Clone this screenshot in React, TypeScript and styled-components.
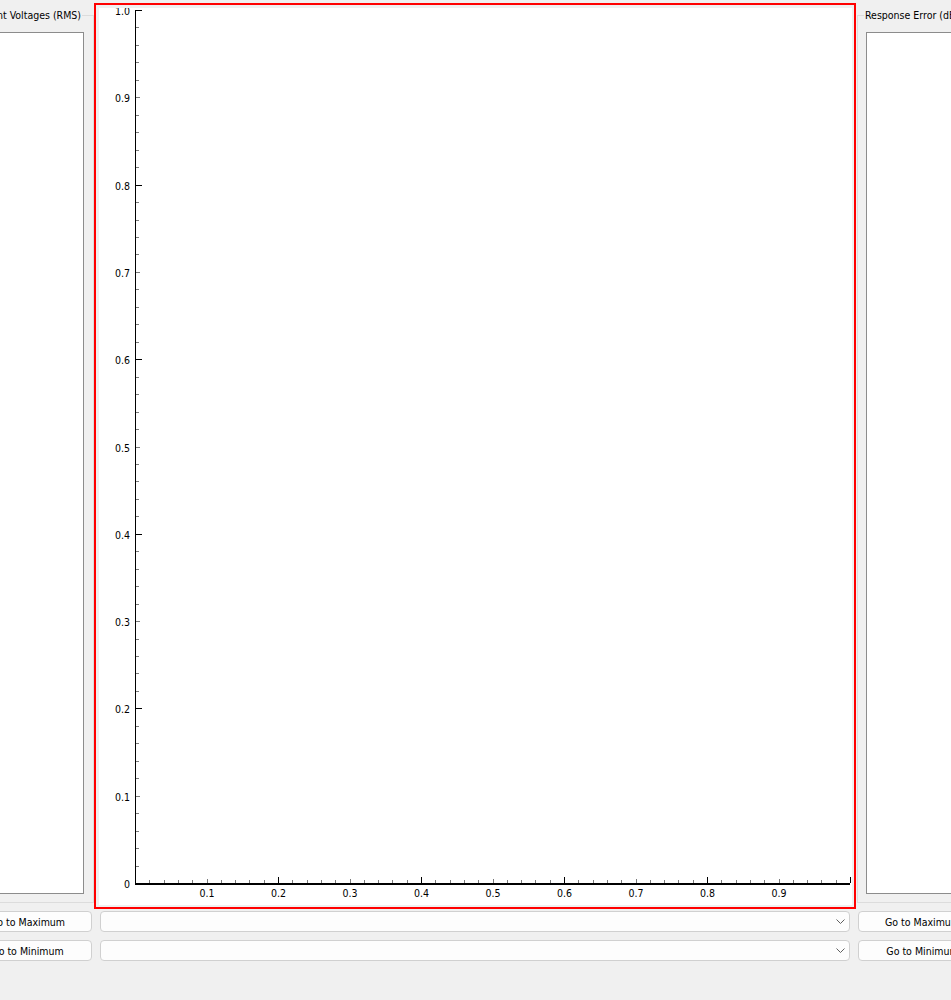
import React from "react";
import styled, { createGlobalStyle } from "styled-components";

const UI_FONT = '"DejaVu Sans Condensed", "DejaVu Sans", "Liberation Sans", sans-serif';

const GlobalStyle = createGlobalStyle`
  html, body {
    margin: 0;
    padding: 0;
    background: #f0f0f0;
    overflow: hidden;
  }
  body {
    font-family: ${UI_FONT};
    font-stretch: semi-condensed;
    font-size: 10.5px;
    color: #000;
  }
`;

const Window = styled.div`
  width: 1054px;
  margin-left: -66px;
  padding-top: 3px;
  display: flex;
  flex-direction: column;
  gap: 2px;
`;

const TopRow = styled.div`
  display: grid;
  grid-template-columns: 160px 763px 131px;
  height: 906px;
`;

const GroupBox = styled.fieldset`
  margin: 6px 0 6px 0;
  padding: 10px 9px 8px 8px;
  border: 1px solid #dcdcdc;
  min-width: 0;
  display: flex;
  flex-direction: column;
`;

const GroupTitle = styled.legend<{ $alignRight?: boolean }>`
  padding: 0 1px;
  line-height: 13px;
  font-size: 10.5px;
  white-space: nowrap;
  color: #000;
  ${(p) =>
    p.$alignRight
      ? "margin-left: auto; margin-right: 2px;"
      : "margin-left: -2px;"}
`;

const ListBox = styled.div`
  flex: 1;
  background: #fff;
  border: 1px solid #8c8c8c;
`;

const PlotFrame = styled.div`
  margin-right: 1px;
  border: 2px solid #ff0000;
  padding: 3px 2px 2px 3px;
  background: #f0f0f0;
  display: flex;
`;

const Canvas = styled.div`
  flex: 1;
  background: #fff;
  overflow: hidden;
`;

const BottomGrid = styled.div`
  margin-left: 29px;
  display: grid;
  grid-template-columns: 129px 750px 129px;
  grid-auto-rows: 21px;
  column-gap: 8px;
  row-gap: 8px;
`;

const PushButton = styled.button`
  height: 21px;
  margin: 0;
  padding: 0;
  border: 1px solid #d0d0d0;
  border-radius: 4px;
  background: #fdfdfd;
  font-family: ${UI_FONT};
  font-stretch: semi-condensed;
  font-size: 10.5px;
  color: #000;
  white-space: nowrap;
`;

const ComboBox = styled.div`
  height: 21px;
  box-sizing: border-box;
  border: 1px solid #d0d0d0;
  border-radius: 4px;
  background: #fdfdfd;
  display: flex;
  align-items: center;
  justify-content: flex-end;
  padding-right: 4px;
`;

const Chevron = () => (
  <svg width="9" height="6" viewBox="0 0 9 6">
    <polyline points="0.5,0.5 4.5,4.5 8.5,0.5" fill="none" stroke="#606060" strokeWidth="1" />
  </svg>
);

const W = 753;
const H = 897;
const xOf = (v: number) => 36 + 715 * v;
const yOf = (v: number) => 875 - 873 * v;

const Plot = () => {
  const ticks: React.ReactNode[] = [];
  for (let i = 0; i <= 50; i++) {
    const v = i / 50;
    const major = i % 10 === 0;
    const medium = !major && i % 5 === 0;
    const len = major ? 6 : medium ? 4 : 3;
    const color = major ? "#000" : "#7a7a7a";
    const yy = Math.round(yOf(v));
    const xx = Math.round(xOf(v));
    ticks.push(<rect key={`y${i}`} x={37} y={yy} width={len} height={1} fill={color} />);
    ticks.push(<rect key={`x${i}`} x={xx} y={875 - len} width={1} height={len} fill={color} />);
  }
  const labels: React.ReactNode[] = [];
  for (let k = 0; k <= 10; k++) {
    const v = k / 10;
    const txt = k === 0 ? "0" : v.toFixed(1);
    labels.push(
      <text key={`yl${k}`} x={31} y={Math.round(yOf(v)) + 5} textAnchor="end">
        {txt}
      </text>
    );
    if (k > 0 && k < 10) {
      labels.push(
        <text key={`xl${k}`} x={xOf(v) + 0.5} y={888.5} textAnchor="middle">
          {txt}
        </text>
      );
    }
  }
  return (
    <svg
      width={W}
      height={H}
      viewBox={`0 0 ${W} ${H}`}
      style={{ display: "block" }}
      fontFamily={UI_FONT}
      fontSize="10.5"
      fill="#000"
    >
      <rect x={36} y={2} width={1} height={875} fill="#000" />
      <rect x={36} y={875} width={715} height={2} fill="#000" />
      {ticks}
      {labels}
    </svg>
  );
};

export default function App() {
  return (
    <>
      <GlobalStyle />
      <Window>
        <TopRow>
          <GroupBox>
            <GroupTitle $alignRight>Component Voltages (RMS)</GroupTitle>
            <ListBox />
          </GroupBox>
          <PlotFrame>
            <Canvas>
              <Plot />
            </Canvas>
          </PlotFrame>
          <GroupBox>
            <GroupTitle>Response Error (dB)</GroupTitle>
            <ListBox />
          </GroupBox>
        </TopRow>
        <BottomGrid>
          <PushButton>Go to Maximum</PushButton>
          <ComboBox>
            <Chevron />
          </ComboBox>
          <PushButton>Go to Maximum</PushButton>
          <PushButton>Go to Minimum</PushButton>
          <ComboBox>
            <Chevron />
          </ComboBox>
          <PushButton>Go to Minimum</PushButton>
        </BottomGrid>
      </Window>
    </>
  );
}
